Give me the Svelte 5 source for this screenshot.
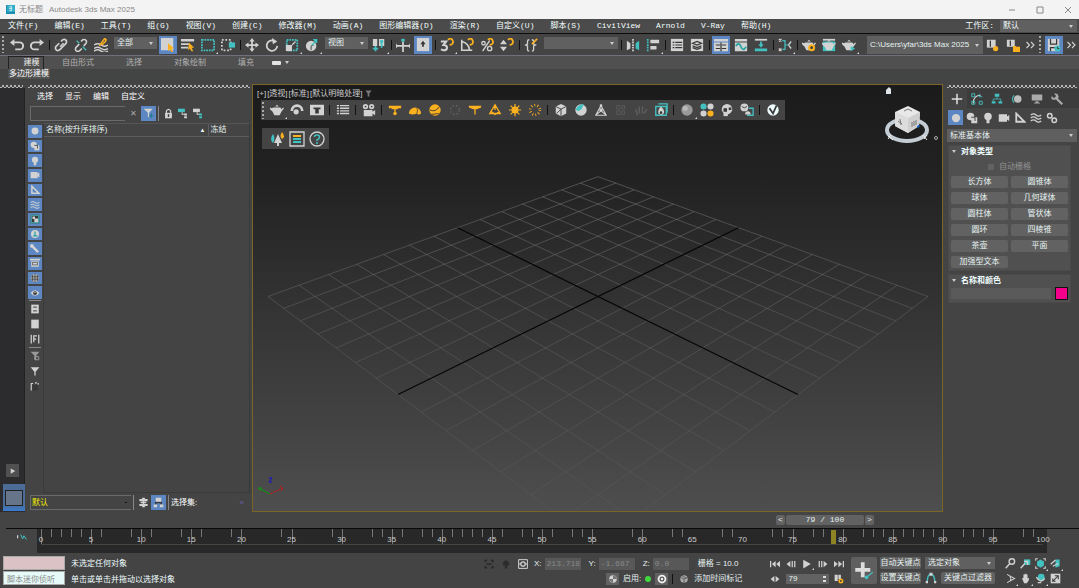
<script lang="ts">
    const g = '#d2d2d2';
    const t = '#43c0c0';
    const o = '#fbb01f';
    const d = '#383838';

    const fill = (path: string, c = g) => `<path d="${path}" fill="${c}"/>`;
    const line = (path: string, c = g, w = 1.5) => `<path d="${path}" fill="none" stroke="${c}" stroke-width="${w}"/>`;
    const dot = (x: number, y: number, r: number, c = g) => `<circle cx="${x}" cy="${y}" r="${r}" fill="${c}"/>`;
    const magnet = line('M9 2Q13-1 14.500 3T11 8', o, 2);
    const pot = (c = g) => fill('M4 5h8l1 2 2-2 1 1-3 4-2 4H5L3 10 0 7V5l2 1zM6 4l2-2 2 2z', c);

    const icons: Record<string, string> = {
        undo: line('M4 5h7a3 3 0 0 1 0 8H6', g, 2.2) + fill('M0 5l5-4v8z'),
        redo: line('M12 5H5a3 3 0 0 0 0 8h5', g, 2.2) + fill('M16 5l-5-4v8z'),
        link: line('M7 10l4-4M8 4l2-2q3-1 4 1t-1 4l-3 3M6 6l-4 4q-1 3 1 4t4-1l3-3', g, 2),
        unlink: line('M8 4l2-2q3-1 4 1t-1 4l-2 2M6 7l-4 4q-1 3 1 4t4-1l2-2', g, 1.8) + line('M3 3l3 3M10 10l4 4', t, 1.5),
        bind: line('M0 8q4-3 8 0t8 0M0 12q4-3 8 0t8 0M0 15q4-3 8 0t8 0', g, 1.6) + line('M6 9L12 1q3 0 1 3L9 8', o, 1.8),
        select: fill('M0 0h14v14H0z') + fill('M8 6l7 6-3 0 2 4-2 0-2-3-2 2z', o),
        byname: fill('M0 1h15v3H0zM0 6h9v2H0zM0 10h8v2H0z') + fill('M9 5l6 6-3 0 2 4-2 0-2-3-2 2z', o),
        rect: `<path d="M1 2h14v12H1z" fill="none" stroke="${t}" stroke-width="2" stroke-dasharray="2 1"/>`,
        crossing: `<path d="M1 2h10v12H1z" fill="none" stroke="${g}" stroke-width="2" stroke-dasharray="2 2"/>` + fill('M9 5h7v6H9z', t),
        move: fill('M8 0l3 4H9v3h3V5l4 3-4 3V9H9v3h2l-3 4-3-4h2V9H4v2L0 8l4-3v2h3V4H5z'),
        rotate: line('M10 3A6 6 0 1 0 14 9', g, 2) + fill('M8 0l6 4-5 3z'),
        scale: `<path d="M2 2h12v12H2z" fill="none" stroke="${t}" stroke-width="2" stroke-dasharray="2 1"/>` + fill('M1 8h7v7H1z') + line('M8 8l4-4', g),
        place: dot(7, 9, 6) + line('M7 9l3-1M7 9v5', d, 1) + fill('M9 1h5v5l-2-1-4 4-1-1 4-4z', t),
        pivot: fill('M1 1h5v8H1zM8 1h6v8H8z') + line('M4 9v6M1 12h6M11 4v7', t, 2) + dot(11, 4, 2, t),
        manip: line('M8 4v12M0 9h16', g, 2) + fill('M6 1h4v3H6z', t) + fill('M0 6l2 3-2 3zM16 6l-2 3 2 3z'),
        keyboard: fill('M1 0h14v15H1z') + fill('M8 3l3 4H9v3H7V7H5z', d),
        snap: line('M1 4h6L4 8q4 0 4 3t-4 3l-3-1', g, 2.4) + magnet,
        angle: line('M2 2v12h12M2 4q8 2 9 10', g, 1.8) + magnet,
        percent: line('M3 15L11 3', g, 1.6) + `<circle cx="4" cy="6" r="2" fill="none" stroke="${g}" stroke-width="1.500"/><circle cx="11" cy="12" r="2.500" fill="none" stroke="${g}" stroke-width="1.500"/>` + magnet,
        spinner: fill('M0 7l4-5 4 5zM0 10l4 5 4-5z') + magnet,
        braces: line('M6 2Q4 2 4 4v3L2 8l2 1v4q0 2 2 2M9 2q2 0 2 2v3l2 1-2 1v4q0 2-2 2') + line('M9 7l6-6', o, 2),
        mirror: fill('M1 3l4 3v6l-4 2z') + fill('M15 3l-4 3v6l4 2z', t) + `<path d="M8 1v15" stroke="${g}" stroke-width="2" stroke-dasharray="2 1"/>`,
        align: `<path d="M2 1v14" stroke="${t}" stroke-width="2" stroke-dasharray="2 1"/>` + fill('M5 2h10v4H5zM5 9h7v4H5z'),
        list: fill('M1 1h14v14H1z') + line('M3 5h2m1 0h8M3 8h2m1 0h8M3 11h2m1 0h8', d, 1.4),
        layers: fill('M1 1h14v14H1z') + line('M3 6l5-2 5 2-5 2zM3 9l5 2 5-2M3 11l5 2 5-2', d, 1.5),
        ribbon: fill('M0 1h16v3H0zM0 5h16v10H0z') + line('M2 8h5M9 8h5M2 12h5M9 12h5M8 5v10', d, 1.4),
        curve: fill('M1 1h14v3H1zM1 5h14v10H1z') + line('M2 9q4-5 6 1t6 0', '#27a3a3', 2),
        schematic: fill('M1 1h14v2H1z') + fill('M7 4h2v3h2l-3 4-3-4h2zM1 12h14v3H1z', t),
        material: line('M1 1l3 3m0-3L1 4M1 12l3 3m0-3l-3 3M15 4l-3 4 3 4', g) + line('M5 3h3v10H5M8 8h4', t, 1.4),
        rsetup: pot() + dot(11, 11, 4, o) + dot(11, 11, 1.5, d),
        rframe: fill('M1 1h14v2H1z') + fill('M1 4h14v11H1z', t) + pot(),
        render: pot() + fill('M10 9l5 3-5 3z', t),
        docset: fill('M1 2h10v9H1z') + line('M5 3v7', d) + dot(11, 12, 3, o),
        docopen: fill('M1 2h9v8H1z') + line('M5 3v6', d) + fill('M8 9h3l1 1h4v6H8z', o),
        more: line('M2 4l4 4-4 4M8 4l4 4-4 4'),
        save: fill('M1 1h13v14H1z') + line('M4 1v6h7V1M4 15v-4h5', d, 1.4) + dot(12, 12, 3.5, t) + line('M12 10v2h2', d, 1),
        pot: pot(),
        lens: line('M2 9a6 6 0 1 1 12 0', g, 3) + dot(7, 10, 3),
        potbox: fill('M0 2h16v12H0z') + fill('M4 5h8v2h-2v5H6V7H4z', d),
        rows: line('M1 3h14M1 6h14M1 9h14M1 12h14', g, 1.6) + line('M4 1v13', d, 1),
        camera: dot(4, 4, 3) + dot(11, 4, 3) + dot(4, 4, 1, d) + dot(11, 4, 1, d) + fill('M2 8h10v2l3-2v6l-3-2v3H2z'),
        plight: fill('M1 3h14v3h-3l-1 1H5L4 6H1z', o) + line('M8 6v6', o) + dot(8, 12, 2, o),
        dome: fill('M1 12a6 6 0 0 1 14 0q-3 2-5 0-5 2-9 0z', o) + line('M10 6q2 3 0 6', d, .8),
        ball: dot(8, 8, 6.5, o) + line('M2 8q7 3 11-4M4 13l8-1', d, 1),
        ghost: `<circle cx="8" cy="8" r="5" fill="none" stroke="#5b5b5b" stroke-width="2" stroke-dasharray="2 2"/>`,
        ies: fill('M1 3h14v2l-5 2H6L1 5z', o) + line('M8 6v7', o),
        cone: line('M8 2L2 12h12zM8 2v6M4 10l4 3 5-3', o, 1.5),
        sun: dot(8, 8, 4, o) + line('M8 1v14M1 8h14M3 3l10 10M13 3L3 13', o, 1.4),
        rays: `<circle cx="8" cy="8" r="5.500" fill="none" stroke="${o}" stroke-width="3" stroke-dasharray="1 2.500"/>`,
        cube: fill('M8 1l6 3v8l-6 3-6-3V4z') + line('M2 4l6 3 6-3M8 7v8M8 7L3 12', d, 1),
        clip: dot(8, 8, 6.5) + fill('M2 8q1-6 9-7-1 6-6 8z', t),
        tri: line('M8 3L2 14h12zM8 9l-5 4M8 9l5 4', g, 1.2) + dot(8, 8, 2) + dot(8, 3, 1.5),
        fur: line('M3 3h4v4H3zM9 3h3v4H9zM3 9h4v4H3zM9 9h3v4H9z', '#5b5b5b', 1),
        hand: line('M4 14L2 7m4 5V4m3 8l1-8m1 8l4-5', '#606060', 1.5),
        fire: line('M2 4h12v10H2zM5 1h10v10', t, 1.5) + fill('M8 4q5 5 3 8t-6 0q-1-4 3-8z') + dot(8, 11, 1.5, d),
        sphere: dot(8, 8, 6.5, '#999') + dot(6, 6, 3, '#b8b8b8'),
        balls: dot(4, 4, 3.5, t) + dot(12, 4, 3.5) + dot(4, 12, 3.5) + dot(12, 12, 3.5, o),
        skull: dot(8, 7, 6) + fill('M4 6h4v4H4zM10 5h3v3h-3z', d) + fill('M4 11h5v4H4z'),
        swap: dot(5, 5, 4.5) + line('M2 4q3 3 6 0', d, 1) + line('M10 6h5v8H8', t) + fill('M6 11q3-3 6 0v2H6z'),
        vray: dot(8, 8, 6.5, '#eefcfc') + line('M4 6l4 6 4-9', d, 2),
        trees: fill('M4 3q3 4 0 9-4-3 0-9z', t) + fill('M9 3l4 9H5zM8 12h2v3H8z') + fill('M13 1q4 5 0 7-3-3 0-7z', o),
        panel: line('M1 1h14v14H1z', g, 1.3) + line('M4 5h8', o, 2) + line('M4 8h8M4 11h8', t, 2),
        help: `<circle cx="8" cy="8" r="7" fill="none" stroke="${g}" stroke-width="1.300"/>` + line('M5.500 6q0-2 2.500-2t2.500 2-2.500 3v1M8 11v2', t, 1.5),
        circle: dot(8, 8, 5.5),
        shapes: dot(6, 6, 5) + fill('M7 7h8v8H7z') + line('M7 7h5v5', d, 1.2),
        bulb: dot(8, 6, 5) + fill('M6 10h4v5H6z'),
        cam: fill('M1 3h11v3l3-2v8l-3-2v3H1z'),
        tape: line('M3 2v11h11z', g, 2.4),
        waves: line('M1 4q4-3 7 0t7 0M1 8q4-3 7 0t7 0M1 12q4-3 7 0t7 0', g, 1.6),
        group: fill('M1 1h14v14H1z', d) + line('M2 2h12v12H2z', t) + fill('M4 4h4v4H4zM7 7h6v6H7z'),
        xref: dot(8, 8, 6.5) + line('M8 4v7H5h7', '#27a3a3', 2),
        bone: line('M3 3l10 10', g, 4) + dot(3, 3, 3),
        box: fill('M2 5h12v9H2zM0 1h16v3H0z') + line('M4 7h8v4H4z', d, 1),
        globe: dot(8, 8, 6.5, '#aaa') + line('M8 1v14M4 3v10M12 3v10M2 6h12M2 10h12', d, 1),
        eye: fill('M1 8q7-9 14 0-7 9-14 0z') + dot(8, 8, 3, d) + dot(8, 7, 1),
        sheet: fill('M2 1h12v14H2z') + line('M5 5h6M5 11h6', d, 1.5),
        blank: fill('M2 1h12v14H2z'),
        brackets: fill('M1 1h2v14H1zM13 1h2v14h-2zM5 2h6v2H7v3h3v2H7v4H5z'),
        funnelx: fill('M1 1h14L10 7v7H7V7z', '#999') + line('M8 9h6v5H8z', '#999'),
        vfilter: fill('M1 1h14L10 8v7H6V8z', '#777'),
        funnel: fill('M1 2h14L9 9v6H7V9z'),
        tray: line('M2 15V4h3M8 3h3M13 3v3', g, 1.8) + fill('M4 6h9v9H4z', '#383838'),
        filter: fill('M1 1h13L9 7v7l-2-2V7z') + line('M9 11h6M12 8v6', '#247c8c', 2),
        lock: fill('M3 7h10v8H3z') + line('M5 8V4q3-4 6 0v3', g, 1.8) + fill('M7 9h2v4H7z', d),
        tree1: fill('M0 1h10v5H0z', t) + line('M6 6v3h4') + fill('M9 8h4v3H9zM9 12h4v3H9z'),
        tree2: fill('M0 1h10v5H0z') + line('M6 6v3h4') + fill('M9 8h4v3H9zM9 12h4v3H9z', t),
        stack: fill('M6 1h4v2h4v3H9v1h3v2H9v1h5v3h-4v2H6v-2H2v-3h5V9H4V7h3V6H2V3h4z'),
        nodes: line('M4 11V8h8v3M8 6v2', d, 2) + fill('M4 1h8v6H4zM1 11h5v4H1zM10 11h5v4h-5z'),
        plus: line('M8 1v14M1 8h14', '#e0e0e0', 2),
        modify: line('M3 14Q3 3 13 3', g) + line('M1 1h4v4H1zM11 11h4v4h-4zM1 11h4v4H1zM11 1v4h4', t, 1.2),
        hier: fill('M5 1h6v4H5zM1 11h5v3H1zM10 11h5v3h-5z', t) + line('M8 5v3M3 11V8h10v3', t, 1),
        motion: dot(9, 8, 5, '#bdbdbd') + line('M4 3q-4 5 0 10', t),
        display: fill('M1 2h14v8H1zM6 11h4v2H6zM4 13h8v1H4z', '#aaa'),
        wrench: line('M7 7l8 8', '#aaa', 3) + fill('M1 4l3 3 3-3-3-3q5-1 6 3t-5 5-4-5z', '#aaa'),
        gears: `<circle cx="5" cy="5" r="3" fill="none" stroke="${g}" stroke-width="2"/><circle cx="11" cy="11" r="3" fill="none" stroke="${g}" stroke-width="2"/>`,
        mini: fill('M0 5h2v5H0z') + line('M6 4l3 7 2-5 4 6', t, 1.6),
        region: line('M2 5V2h3M11 2h3v3M2 11v3h3M11 14h3v-3M4 8h8', '#242424', 2),
        lockdim: fill('M3 6q5-8 10 0v4H3zM6 10h4v5H6z', '#2b2b2b'),
        abs: line('M1 1h14v14H1z', g, 1.6) + `<circle cx="8" cy="8" r="3.500" fill="none" stroke="${g}" stroke-width="2"/>` + line('M1 8h4M11 8h4'),
        shield: dot(8, 8, 6) + fill('M8 2v6H2q1 5 6 6V8h6q0-5-6-6z', '#777'),
        ring: dot(8, 8, 7, '#f0f0f0') + `<circle cx="8" cy="8" r="3" fill="none" stroke="#555" stroke-width="2"/>`,
        crate: dot(8, 8, 6, '#aaa') + line('M2 5l6 3 6-3M8 8v7M4 2l8 5', d, 1),
        first: fill('M0 3h2v10H0zM9 3v10L3 8zM16 3v10l-6-5z'),
        prev: fill('M7 3v10L1 8zM9 3h2v10H9zM13 3h2v10h-2z'),
        play: fill('M2 1l12 7-12 7z'),
        next: fill('M1 3h2v10H1zM5 3h2v10H5zM9 3l6 5-6 5z'),
        last: fill('M0 3v10l6-5zM7 3v10l6-5zM14 3h2v10h-2z'),
        keymode: fill('M7 3v10L1 8zM9 3v10l6-5z'),
        timecfg: fill('M1 1h5v10H1zM7 1h4v7H7z') + dot(11, 11, 4, o) + dot(11, 11, 1.5, d),
        setkey: line('M7 1v12M1 7h12', '#ddd', 3) + line('M10 13l5-4', t, 1) + dot(10, 13, 1.5, t),
        keyfig: line('M3 14Q3 3 8 3t5 11', t, 1.8) + fill('M6 1h4v4H6zM1 12h3v3H1zM12 12h3v3h-3z'),
        zoom: `<circle cx="10" cy="5" r="4" fill="none" stroke="${g}" stroke-width="2"/>` + line('M7 8l-6 7', g, 2),
        zoomall: fill('M6 2h9v8H6z', t) + line('M7 8l-6 7M6 5h5v5', g, 2),
        extents: line('M1 4V1h3M12 1h3v3M1 12v3h3M12 15h3v-3') + fill('M8 2l5 3v6l-5 3-5-3V5z', t),
        extall: fill('M8 2h6v10l-6 2z', t) + line('M1 9l7-6M4 12l8-4', g, 2),
        fov: line('M3 2l11 6-11 6M7 5q3 4 0 7'),
        pan: fill('M3 8l2-1V2h2v5-6h2v6-5h2v6l2-1v3l-3 5H6z'),
        orbit: dot(9, 6, 5, t) + line('M2 6q6 10 12 2M4 14h5', g, 2),
        maxi: fill('M1 1h14v14H1z') + line('M5 11l7-7M7 4h5v5M4 8v4h4', d, 1.5),
        logo: fill('M0 0h16v16H0z', '#1b8faf') + fill('M2 0h14v12H2z', '#36aeca') + line('M6 3h4v3H6h4v4H6', '#d9f4fa', 1.5),
    };

    const menus = ['文件(F)', '编辑(E)', '工具(T)', '组(G)', '视图(V)', '创建(C)', '修改器(M)', '动画(A)', '图形编辑器(D)', '渲染(R)', '自定义(U)', '脚本(S)', 'CivilView', 'Arnold', 'V-Ray', '帮助(H)'];
    // '|' is a separator, '*' marks a pressed button, ':' a drop-down
    const tools = ['undo', 'redo', '|', 'link', 'unlink', 'bind', ':全部', '*select', 'byname', 'rect', 'crossing', '|', 'move', 'rotate', 'scale', 'place', ':视图', 'pivot', '|', 'manip', '*keyboard', '|', 'snap', 'angle', 'percent', 'spinner', '|', 'braces', ':', '|', 'mirror', 'align', '|', 'list', 'layers', '|', '*ribbon', 'curve', 'schematic', '|', 'material', '|', 'rsetup', 'rframe', 'render'];
    const viewTools = ['pot', 'lens', 'potbox', '|', 'rows', '|', 'camera', '|', 'plight', 'dome', 'ball', 'ghost', 'ies', 'cone', 'sun', 'rays', '|', 'cube', 'clip', 'tri', 'fur', 'hand', 'fire', '|', 'sphere', 'balls', 'skull', 'swap', '|', 'vray'];
    const filters = ['circle', 'shapes', 'bulb', 'cam', 'tape', 'waves', 'group', 'xref', 'bone', 'box', 'globe', 'eye'];
    const flyouts = ['rect', 'scale', 'place', 'pivot', 'snap', 'align', 'material', 'render', 'pot', 'sphere', 'play', 'extents', 'extall', 'pan', 'orbit', 'fov'];
    const ribbonTabs = ['自由形式', '选择', '对象绘制', '填充'];
    const panelTabs = ['plus', 'modify', 'hier', 'motion', 'display', 'wrench'];
    const categories = ['circle', 'shapes', 'bulb', 'cam', 'tape', 'waves', 'gears'];
    const primitives = ['长方体', '圆锥体', '球体', '几何球体', '圆柱体', '管状体', '圆环', '四棱锥', '茶壶', '平面', '加强型文本'];
    const axes = [['X:', '213.718'], ['Y:', '-1.687'], ['Z:', '0.0']];
    const nav = ['zoom', 'zoomall', 'extents', 'extall', 'fov', 'pan', 'orbit', 'maxi'];

    const ticks = [0, 1, 2, 3, 4, 5, 6, 9, 10, 11, 14, 15, 16, 19, 20, 24, 25, 29, 30, 33, 34, 35, 36, 38, 39, 40, 41, 42, 43, 44, 45, 46, 48, 49, 50, 51, 53, 54, 55, 59, 60, 63, 64, 68, 69, 73, 74, 75, 77, 78, 80, 82, 83, 84, 85, 86, 87, 88, 89, 90, 92, 93, 94, 95, 98, 99];
    const labels = Array.from({ length: 21 }, (_, i) => i * 5);

    let frame = $state(79);

    // perspective projection of the ground plane, u and v in -1..1
    function project(u: number, v: number) {
        const s = u + v;
        const w = 1 - 0.175 * s;
        return `${(598 + (165 * (u - v)) / w).toFixed(1)} ${((296.5 + 29 * s) / w).toFixed(1)}`;
    }

    const cells = 7;
    let gridPath = '';
    for (let i = -cells; i <= cells; i++) {
        if (i === 0) continue;
        const k = i / cells;
        gridPath += `M${project(k, -1)}L${project(k, 1)}M${project(-1, k)}L${project(1, k)}`;
    }
    const axisPath = `M${project(0, -1)}L${project(0, 1)}M${project(-1, 0)}L${project(1, 0)}`;
</script>

{#snippet icon(name: string)}
    <svg class="icon" viewBox="0 0 16 16" aria-hidden="true">{@html icons[name]}</svg>
{/snippet}

{#snippet tool(name: string, on = false)}
    <button class="tool" class:on class:fly={flyouts.includes(name)} aria-label={name}>{@render icon(name)}</button>
{/snippet}

{#snippet drop(text: string, label: string, cls = '')}
    <span class="drop {cls}">
        <select aria-label={label}><option>{text}</option></select>
    </span>
{/snippet}

<div class="app">
    <header class="titlebar">
        <span class="logo">{@render icon('logo')}</span>
        <span>无标题</span>
        <span class="grow">Autodesk 3ds Max 2025</span>
        <button aria-label="minimize"><svg viewBox="0 0 8 8"><path d="M1 4h6" /></svg></button>
        <button aria-label="maximize"><svg viewBox="0 0 8 8"><path d="M1 1h6v6H1z" /></svg></button>
        <button aria-label="close"><svg viewBox="0 0 8 8"><path d="M1 1l6 6M7 1L1 7" /></svg></button>
    </header>

    <nav class="menubar">
        {#each menus as menu}
            <button>{menu}</button>
        {/each}
        <span class="space">工作区:</span>
        {@render drop('默认', '工作区', 'workspace')}
    </nav>

    <div class="toolbar">
        <i class="grip"></i>
        {#each tools as item}
            {#if item === '|'}
                <i class="sep"></i>
            {:else if item[0] === ':'}
                {@render drop(item.slice(1), 'filter', item === ':' ? 'sets' : 'short')}
            {:else if item[0] === '*'}
                {@render tool(item.slice(1), true)}
            {:else}
                {@render tool(item)}
            {/if}
        {/each}
        <span class="tail">
            {@render drop('C:\\Users\\yfar\\3ds Max 2025', 'project', 'path')}
            {@render tool('docset')}
            {@render tool('docopen')}
            <button class="more" aria-label="more">{@render icon('more')}</button>
            <i class="grip"></i>
            {@render tool('save', true)}
            <button class="more" aria-label="more">{@render icon('more')}</button>
        </span>
    </div>

    <section class="ribbon">
        <div class="tabs">
            <button class="active">建模</button>
            {#each ribbonTabs as tab}
                <button>{tab}</button>
            {/each}
            <i class="pill"></i><i class="caret"></i>
        </div>
        <div class="sub"><span>多边形建模</span></div>
    </section>

    <main>
        <aside class="strip">
            <i class="handle"></i>
            <div class="well">
                <button class="expand" aria-label="expand">{@render icon('play')}</button>
                <button class="thumb" aria-label="layout"><i></i></button>
            </div>
        </aside>

        <section class="explorer">
            <i class="handle"></i>
            <div class="emenu">
                <button>选择</button><button>显示</button><button>编辑</button><button>自定义</button>
            </div>
            <div class="search">
                <input type="text" aria-label="查找" />
                <button class="clear" aria-label="clear">✕</button>
                <button class="small on" aria-label="filter">{@render icon('filter')}</button>
                <i class="bar"></i>
                <button class="small" aria-label="lock">{@render icon('lock')}</button>
                <button class="small" aria-label="hierarchy">{@render icon('tree1')}</button>
                <button class="small" aria-label="layers">{@render icon('tree2')}</button>
            </div>
            <div class="ebody">
                <div class="side">
                    <div class="filters">
                        {#each filters as name}
                            <button class="on" aria-label={name}>{@render icon(name)}</button>
                        {/each}
                    </div>
                    <i class="hr"></i>
                    {#each ['sheet', 'blank', 'brackets'] as name}
                        <button aria-label={name}>{@render icon(name)}</button>
                    {/each}
                    <i class="hr"></i>
                    {#each ['funnelx', 'funnel', 'tray'] as name}
                        <button aria-label={name}>{@render icon(name)}</button>
                    {/each}
                </div>
                <div class="list">
                    <table>
                        <thead><tr><th>名称(按升序排序)<b>▲</b></th><th class="frozen">冻结</th></tr></thead>
                    </table>
                </div>
            </div>
            <div class="efoot">
                {@render drop('默认', '层', 'layer')}
                <i class="bar"></i>
                <button class="small" aria-label="stack">{@render icon('stack')}</button>
                <button class="small on" aria-label="nodes">{@render icon('nodes')}</button>
                <i class="bar"></i>
                <span>选择集:</span>
                <b>»</b>
            </div>
        </section>

        <section class="viewport">
            <svg class="scene" viewBox="253 85 689 426" preserveAspectRatio="xMidYMid slice" aria-hidden="true">
                <defs>
                    <linearGradient id="fade" gradientUnits="userSpaceOnUse" x1="0" y1="175" x2="0" y2="511">
                        <stop offset="0" stop-color="#808080" stop-opacity=".7" />
                        <stop offset=".4" stop-color="#747474" stop-opacity=".55" />
                        <stop offset="1" stop-color="#747474" stop-opacity=".2" />
                    </linearGradient>
                </defs>
                <path d={gridPath} fill="none" stroke="url(#fade)" stroke-width=".7" />
                <path d={axisPath} fill="none" stroke="#050505" stroke-width="1.200" />
                <path d="M270 494L259 488M259 488l1 3M259 488l3 0" stroke="#0a9a0a" fill="none" />
                <path d="M270 494L283 488M280 486l3 2-2 3" stroke="#c81414" stroke-dasharray="3 1" fill="none" />
                <path d="M269 478h3l-3 4h3" stroke="#1010d0" fill="none" />
                <!-- view cube -->
                <path d="M886 94v-4l3-3 2 2v5z" fill="#dfe4e8" />
                <ellipse cx="907" cy="130" rx="20" ry="11" fill="#1e1e1e" stroke="#c4ccd4" stroke-width="4" />
                <path d="M888 136l5 4M891 135l-3 4M923 135l4 5M927 135l-3 4" stroke="#eee" />
                <path d="M895 112l13-6 12 6-1 14-11 7-13-7z" fill="#e8e8e8" />
                <path d="M895 112l13 6 12-6-1 14-11 7z" fill="#cfcfcf" />
                <path d="M895 112l13 6v15l-13-7z" fill="#dcdcdc" />
                <path d="M904 111l4-2 4 2M898 121l4 3M900 119l1 6M912 122v5M914 121v5M916 120v5" stroke="#777" fill="none" />
                <path d="M917 127l2-2v2z" fill="#1468c8" stroke="#1468c8" />
                <circle cx="936" cy="138" r="1.500" fill="none" stroke="#aaa" />
            </svg>
            <div class="vlabel">
                <button>[+]</button><button>[透视]</button><button>[标准]</button><button>[默认明暗处理]</button>
                <span>{@render icon('vfilter')}</span>
            </div>
            <div class="vtools">
                <i class="grip"></i>
                {#each viewTools as item}
                    {#if item === '|'}<i class="sep"></i>{:else}{@render tool(item)}{/if}
                {/each}
            </div>
            <div class="vtools second">
                {#each ['trees', 'panel', 'help'] as item}{@render tool(item)}{/each}
            </div>
        </section>

        <aside class="command">
            <i class="handle"></i>
            <div class="ptabs">
                {#each panelTabs as name, i}
                    <button class:active={i === 0} aria-label={name}>{@render icon(name)}</button>
                {/each}
            </div>
            <div class="cats">
                {#each categories as name, i}
                    <button class:on={i === 0} aria-label={name}>{@render icon(name)}</button>
                {/each}
            </div>
            {@render drop('标准基本体', '类别', 'kind')}
            <section class="rollout">
                <h2><i class="caret"></i>对象类型</h2>
                <label class="auto"><input type="checkbox" disabled />自动栅格</label>
                <div class="prims">
                    {#each primitives as name}
                        <button>{name}</button>
                    {/each}
                </div>
            </section>
            <section class="rollout">
                <h2><i class="caret"></i>名称和颜色</h2>
                <div class="naming">
                    <input type="text" aria-label="名称" disabled />
                    <button class="swatch" aria-label="颜色"></button>
                </div>
            </section>
        </aside>
    </main>

    <div class="slider">
        <button class="step" aria-label="previous frame">&lt;</button>
        <button class="pos">{frame} / 100</button>
        <button class="step" aria-label="next frame">&gt;</button>
    </div>

    <div class="timeline">
        <button class="mini" aria-label="mini curve editor">{@render icon('mini')}</button>
        <div class="track">
            <div class="scale">
                {#each ticks as n}
                    <i class="tick" class:major={n % 5 === 0} style="left: {n}%"></i>
                {/each}
                {#each labels as n}
                    <span style="left: {n}%">{n}</span>
                {/each}
                <i class="marker" style="left: {frame}%"></i>
            </div>
        </div>
    </div>

    <footer>
        <div class="listener">
            <input type="text" class="pink" aria-label="macro recorder" />
            <input type="text" aria-label="listener" value="脚本迷你侦听" />
        </div>
        <div class="prompt">
            <p>未选定任何对象</p>
            <p>单击或单击并拖动以选择对象</p>
        </div>
        <div class="coords">
            <div class="line">
                <button class="mid" aria-label="isolate">{@render icon('region')}</button>
                <button class="mid" aria-label="lock selection">{@render icon('lockdim')}</button>
                <button class="mid" aria-label="absolute mode">{@render icon('abs')}</button>
                {#each axes as [name, value]}
                    <label>{name}<input type="text" {value} disabled /></label>
                {/each}
                <span class="unit">栅格 = 10.0</span>
            </div>
            <div class="line tags">
                <button class="mid raised" aria-label="adaptive">{@render icon('shield')}</button>
                <span>启用:</span>
                <i class="green"></i>
                <button class="mid raised" aria-label="settings">{@render icon('ring')}</button>
                <i class="divider"></i>
                <button class="mid" aria-label="tag">{@render icon('crate')}</button>
                <span>添加时间标记</span>
            </div>
        </div>
        <div class="transport">
            <div class="line">
                {#each ['first', 'prev', 'play', 'next', 'last'] as name}
                    <button class="key" class:fly={name === 'play'} aria-label={name}>{@render icon(name)}</button>
                {/each}
            </div>
            <div class="line">
                <button class="key" aria-label="key mode">{@render icon('keymode')}</button>
                <span class="spin">
                    <input type="text" aria-label="frame" bind:value={frame} />
                    <i></i>
                </span>
                <button class="key" aria-label="time configuration">{@render icon('timecfg')}</button>
            </div>
        </div>
        <button class="big" aria-label="set key">{@render icon('setkey')}</button>
        <div class="keys">
            <button>自动关键点</button>
            {@render drop('选定对象', '集', 'keyset')}
            <button>设置关键点</button>
            <div class="keyrow">
                <span>{@render icon('keyfig')}</span>
                <button>关键点过滤器</button>
            </div>
        </div>
        <div class="nav">
            {#each nav as name}
                <button class:fly={flyouts.includes(name)} aria-label={name}>{@render icon(name)}</button>
            {/each}
        </div>
    </footer>
</div>

<style>
    :global(body) {
        margin: 0;
        background: #444;
    }

    .app {
        display: flex;
        flex-direction: column;
        min-height: 100vh;
        overflow: hidden;
        background: #444;
        color: #e6f2f2;
        font: 8px/10px "Liberation Sans", "Noto Sans CJK SC", sans-serif;
        white-space: nowrap;
    }

    .app * {
        box-sizing: border-box;
    }

    button, input, select {
        margin: 0;
        padding: 0;
        border: 0;
        border-radius: 0;
        background: none;
        color: inherit;
        font: inherit;
        min-width: 0;
    }

    button {
        display: flex;
        align-items: center;
        justify-content: center;
        flex: none;
    }

    i {
        display: block;
        flex: none;
    }

    .icon {
        display: block;
        width: 14px;
        height: 14px;
        flex: none;
    }

    .on {
        background: #5c87c2;
    }

    .fly {
        position: relative;
    }

    .fly::after {
        content: "";
        position: absolute;
        right: 0;
        bottom: 0;
        border: 1px solid #ddd;
        border-top-color: transparent;
        border-left-color: transparent;
    }

    .drop {
        position: relative;
        display: flex;
        flex: none;
        height: 12px;
        background: #606060;
    }

    .drop select {
        width: 100%;
        padding-left: 3px;
        appearance: none;
    }

    .drop::after {
        content: "";
        position: absolute;
        top: 5px;
        right: 4px;
    }

    .drop::after, .caret {
        width: 0;
        height: 0;
        border: 2px solid transparent;
        border-top: 3px solid #ccc;
        border-bottom: 0;
    }

    .handle {
        height: 3px;
        margin: 1px 2px 0 0;
        background: repeating-conic-gradient(#b4b4b4 0 25%, #444 0 50%) 0 0 / 4px 4px;
    }

    .grip {
        width: 2px;
        height: 17px;
        background: repeating-linear-gradient(#aaa 0 2px, #444 2px 4px);
    }

    .titlebar {
        display: flex;
        align-items: center;
        height: 19px;
        padding-left: 6px;
        gap: 6px;
        background: #f3f3f3;
        color: #8a8a8a;
    }

    .logo .icon {
        width: 9px;
        height: 9px;
    }

    .logo {
        margin-right: -2px;
    }

    .grow {
        flex: 1;
    }

    .titlebar button {
        width: 22px;
        height: 19px;
    }

    .titlebar button svg {
        width: 8px;
        height: 8px;
        fill: none;
        stroke: #888;
    }

    .menubar {
        display: flex;
        align-items: center;
        height: 15px;
        padding: 0 2px 0 8px;
        gap: 16px;
        background: #4b4b4b;
        border-bottom: 1px solid #0c0c0c;
        color: #f4ffff;
        font-family: "Liberation Mono", "Noto Sans CJK SC", monospace;
    }

    .space {
        margin: 0 -10px 0 auto;
    }

    .workspace {
        width: 77px;
    }

    .toolbar {
        display: flex;
        align-items: center;
        height: 22px;
        padding-left: 2px;
        border-bottom: 1px solid #70707a;
    }

    .toolbar > .grip {
        margin-right: 3px;
    }

    .tool {
        width: 20px;
        height: 18px;
    }

    .tool.on {
        border: 0 solid #444;
        border-width: 0 1px;
    }

    .sep {
        width: 4px;
        height: 10px;
        background: linear-gradient(#111, #111) 2px 0 / 1px 100% no-repeat;
    }

    .short, .sets {
        width: 43px;
        margin: 0 1px 4px 3px;
    }

    .sets {
        width: 74px;
    }

    .tail {
        display: flex;
        align-items: center;
        margin-left: auto;
    }

    .path {
        width: 116px;
        height: 18px;
    }

    .path::after {
        top: 8px;
    }

    .more {
        width: 15px;
        height: 18px;
    }

    .more .icon {
        width: 12px;
    }

    .tail .grip {
        margin: 0 3px 0 1px;
    }

    .ribbon {
        height: 28px;
    }

    .tabs {
        display: flex;
        align-items: center;
        height: 13px;
        padding-left: 8px;
        background: #505050;
        color: #b0b0b0;
    }

    .tabs button {
        height: 13px;
        padding: 0 16px;
    }

    .tabs .active {
        width: 36px;
        margin-right: 2px;
        padding: 0 3px 0 14px;
        border: 1px solid #222;
        border-bottom: 0;
        color: #eee;
    }

    .pill {
        width: 9px;
        height: 4px;
        margin: 0 4px 0 2px;
        border-radius: 1px;
        background: #e4e4e4;
    }

    .sub {
        height: 11px;
        padding-left: 8px;
        background: #434545;
    }

    .sub span {
        display: inline-block;
        height: 10px;
        padding: 0 1px;
        background: #525252;
        color: #fff;
    }

    main {
        display: flex;
        flex: 1;
    }

    .strip {
        display: flex;
        flex-direction: column;
        width: 25px;
        flex: none;
    }

    .well {
        display: flex;
        flex: 1;
        flex-direction: column;
        justify-content: flex-end;
        background: #2c2c2e;
        border-right: 1px solid #222;
        padding-bottom: 1px;
    }

    .expand {
        width: 13px;
        height: 13px;
        margin: 0 6px 7px;
        background: #505050;
    }

    .expand .icon {
        width: 6px;
        height: 6px;
    }

    .thumb {
        width: 22px;
        height: 27px;
        margin-left: 3px;
        background: linear-gradient(#4a6c96 75%, #3c7cd0);
    }

    .thumb i {
        width: 18px;
        height: 16px;
        border: 1px solid #222;
        background: #66758a;
    }

    .explorer {
        display: flex;
        flex-direction: column;
        width: 227px;
        flex: none;
        padding-left: 3px;
    }

    .emenu {
        display: flex;
        align-items: center;
        gap: 12px;
        height: 18px;
        padding-left: 9px;
        color: #fff;
    }

    .search {
        display: flex;
        align-items: center;
        height: 15px;
        padding-left: 2px;
    }

    .search input {
        width: 95px;
        height: 15px;
        border: 1px solid #6a6a6a;
        border-right: 0;
    }

    .clear {
        width: 16px;
        color: #aaa;
    }

    .small {
        width: 15px;
        height: 15px;
    }

    .small .icon {
        width: 11px;
        height: 11px;
    }

    .bar {
        width: 1px;
        height: 15px;
        margin: 0 2px;
        background: #888;
    }

    .ebody {
        display: flex;
        flex: 1;
        gap: 1px;
        padding: 2px 2px 2px 0;
    }

    .side {
        width: 14px;
        padding-top: 2px;
    }

    .filters {
        display: flex;
        flex-direction: column;
        gap: 2px;
        height: 174px;
    }

    .side button {
        width: 14px;
        height: 15px;
    }

    .side .filters button {
        flex: 1;
        height: auto;
        min-height: 0;
    }

    .side .icon {
        width: 10px;
        height: 10px;
    }

    .hr {
        height: 1px;
        margin: 1px 1px 0;
        background: #888;
    }

    .list {
        flex: 1;
        border: 1px solid #3a3a3a;
        border-top-color: #555;
    }

    table {
        width: 100%;
        border-collapse: collapse;
    }

    th {
        height: 12px;
        padding: 0 2px;
        border-bottom: 1px solid #5c5c5c;
        font-weight: normal;
        text-align: left;
    }

    th b {
        float: right;
        font-size: 6px;
    }

    .frozen {
        width: 41px;
        border-left: 1px solid #5c5c5c;
    }

    .efoot {
        display: flex;
        align-items: center;
        height: 15px;
        margin-bottom: 2px;
        padding: 0 8px 0 2px;
    }

    .layer {
        width: 101px;
        height: 15px;
        background: none;
        border: 1px solid #6a6a6a;
        border-right: 0;
        color: #f4f000;
    }

    .layer select {
        padding-left: 1px;
    }

    .layer::after {
        border: 0;
        top: 6px;
        width: 2px;
        height: 1px;
        background: #111;
    }

    .efoot span:not(.drop) {
        flex: 1;
        color: #fff;
    }

    .efoot b {
        color: #5a5a8a;
    }

    .viewport {
        position: relative;
        flex: 1;
        min-width: 0;
        overflow: hidden;
        padding-left: 8px;
        border: 1px solid #7a6426;
        background: linear-gradient(#1b1b1b, #222 22%, #323233 50%, #4e4e4e);
    }

    .scene {
        position: absolute;
        inset: 0;
        width: 100%;
        height: 100%;
    }

    .vlabel, .vtools {
        position: relative;
        display: flex;
        align-items: center;
    }

    .vlabel {
        height: 15px;
        gap: 1px;
        margin-left: -4px;
        padding-top: 2px;
        color: #ccc;
    }

    .vlabel .icon {
        width: 7px;
        height: 7px;
        margin-left: 2px;
    }

    .vtools {
        width: fit-content;
        height: 20px;
        padding: 0 2px 0 1px;
        background: #444;
    }

    .vtools .grip {
        margin-right: 3px;
    }

    .vtools .sep {
        width: 6px;
    }

    .second {
        height: 21px;
        margin: 8px 0 0 1px;
        padding-left: 5px;
    }

    .second .icon {
        width: 16px;
        height: 16px;
    }

    .command {
        width: 136px;
        flex: none;
        padding-left: 4px;
    }

    .ptabs {
        display: flex;
        height: 19px;
        margin-top: 1px;
        background: #3c3c3c;
    }

    .ptabs button {
        width: 20px;
    }

    .ptabs .active {
        background: #444;
    }

    .ptabs .icon, .cats .icon {
        width: 12px;
        height: 12px;
    }

    .cats {
        display: flex;
        gap: 1px;
        margin: 2px 0 4px 1px;
    }

    .cats button {
        width: 15px;
        height: 15px;
    }

    .kind {
        height: 13px;
        margin-right: 2px;
        background: #5f5f5f;
    }

    .rollout {
        margin: 3px 8px 0 1px;
        padding: 0 2px 2px;
        background: #505050;
        border: 1px solid #4a4a4a;
    }

    h2 {
        display: flex;
        align-items: center;
        gap: 5px;
        height: 11px;
        margin: 0;
        padding-left: 1px;
        font-size: 8px;
        font-weight: bold;
        color: #f0ffff;
    }

    .auto {
        display: flex;
        align-items: center;
        justify-content: center;
        gap: 5px;
        height: 19px;
        color: #909090;
    }

    .auto input {
        width: 6px;
        height: 6px;
        appearance: none;
        background: #626262;
    }

    .prims {
        display: grid;
        grid-template-columns: 1fr 1fr;
        gap: 4px 3px;
    }

    .prims button {
        height: 12px;
        border-radius: 2px;
        background: #626262;
    }

    .naming {
        display: flex;
        align-items: center;
        gap: 4px;
        padding-top: 1px;
    }

    .naming input {
        flex: 1;
        height: 11px;
        background: #5a5a5a;
    }

    .swatch {
        width: 13px;
        height: 13px;
        border: 1px solid #111;
        background: #f5008c;
    }

    .slider {
        display: flex;
        align-items: center;
        justify-content: flex-end;
        gap: 1px;
        height: 16px;
        padding-right: 19%;
        font-family: "Liberation Mono", monospace;
    }

    .slider button {
        height: 10px;
        border-radius: 2px;
        background: #626262;
    }

    .step {
        width: 9px;
    }

    .pos {
        width: 78px;
    }

    .timeline {
        display: flex;
        height: 25px;
        margin-left: 6px;
        border-top: 1px solid #0a0a0a;
    }

    .mini {
        width: 31px;
        height: 16px;
    }

    .mini .icon {
        width: 10px;
        height: 10px;
    }

    .track {
        flex: 1;
        height: 24px;
        margin-right: 32px;
        padding: 0 4px;
        background: #282829;
    }

    .scale {
        position: relative;
        height: 16px;
    }

    .scale::after {
        content: "";
        position: absolute;
        left: 0;
        right: 0;
        bottom: 0;
        border-top: 1px solid #484440;
    }

    .tick, .marker, .scale span {
        position: absolute;
        top: 0;
    }

    .tick {
        width: 1px;
        height: 8px;
        background: #777;
    }

    .major {
        height: 16px;
    }

    .scale span {
        top: 6px;
        transform: translateX(-50%);
        color: #ccc;
    }

    .marker {
        top: 1px;
        width: 5px;
        height: 14px;
        margin-left: -2px;
        background: #8f8424;
    }

    footer {
        display: flex;
        height: 35px;
        padding: 3px 16px 2px 3px;
    }

    .listener {
        display: flex;
        flex-direction: column;
        gap: 1px;
        width: 62px;
    }

    .listener input {
        height: 14px;
        padding-left: 3px;
        background: #e6fbf9;
        color: #8a8a8a;
        border: 1px solid #aaa;
    }

    .listener .pink {
        background: #dbc3c5;
    }

    .prompt {
        flex: 1;
        padding: 3px 0 0 6px;
        color: #f0ffff;
    }

    .prompt p {
        height: 16px;
        margin: 0;
    }

    .line {
        display: flex;
        align-items: center;
        height: 15px;
    }

    .coords {
        width: 288px;
    }

    .mid {
        width: 17px;
        height: 12px;
    }

    .mid .icon {
        width: 10px;
        height: 10px;
    }

    .coords label {
        display: flex;
        align-items: center;
        gap: 3px;
        padding-left: 3px;
        margin-right: 5px;
    }

    .coords input {
        width: 36px;
        height: 12px;
        padding-left: 2px;
        background: #585858;
        color: #888;
        font-family: "Liberation Mono", monospace;
    }

    .unit {
        padding-left: 4px;
    }

    .tags {
        gap: 4px;
        padding-left: 126px;
    }

    .tags .mid {
        width: 13px;
    }

    .raised {
        background: #626262;
    }

    .green {
        width: 6px;
        height: 6px;
        border-radius: 50%;
        background: #41d83e;
    }

    .divider {
        width: 1px;
        height: 10px;
        background: #111;
    }

    .transport {
        width: 78px;
        margin-right: 5px;
    }

    .transport .line {
        justify-content: space-between;
    }

    .key {
        width: 14px;
        height: 13px;
    }

    .key .icon {
        width: 10px;
        height: 10px;
    }

    .spin {
        display: flex;
        align-items: center;
        width: 43px;
        height: 10px;
        padding: 0 3px;
        background: #626262;
    }

    .spin input {
        flex: 1;
    }

    .spin i {
        width: 3px;
        height: 6px;
        background: linear-gradient(#ddd 2px, transparent 2px 4px, #ddd 4px);
    }

    .big {
        width: 26px;
        height: 27px;
        margin-top: 1px;
        border-radius: 2px;
        background: #5f5f5f;
    }

    .big .icon {
        width: 20px;
        height: 20px;
    }

    .keys {
        display: grid;
        grid-template-columns: 41px 70px;
        gap: 3px 4px;
        align-content: start;
        margin: 1px 8px 0 3px;
    }

    .keys button {
        height: 12px;
        border-radius: 2px;
        background: #626262;
    }

    .keyrow {
        display: flex;
        gap: 4px;
    }

    .keyrow .icon {
        width: 12px;
        height: 12px;
    }

    .keyrow button {
        flex: 1;
    }

    .nav {
        display: grid;
        grid-template-columns: repeat(4, 15px);
        grid-auto-rows: 15px;
    }

    .nav .icon {
        width: 11px;
        height: 11px;
    }
</style>
